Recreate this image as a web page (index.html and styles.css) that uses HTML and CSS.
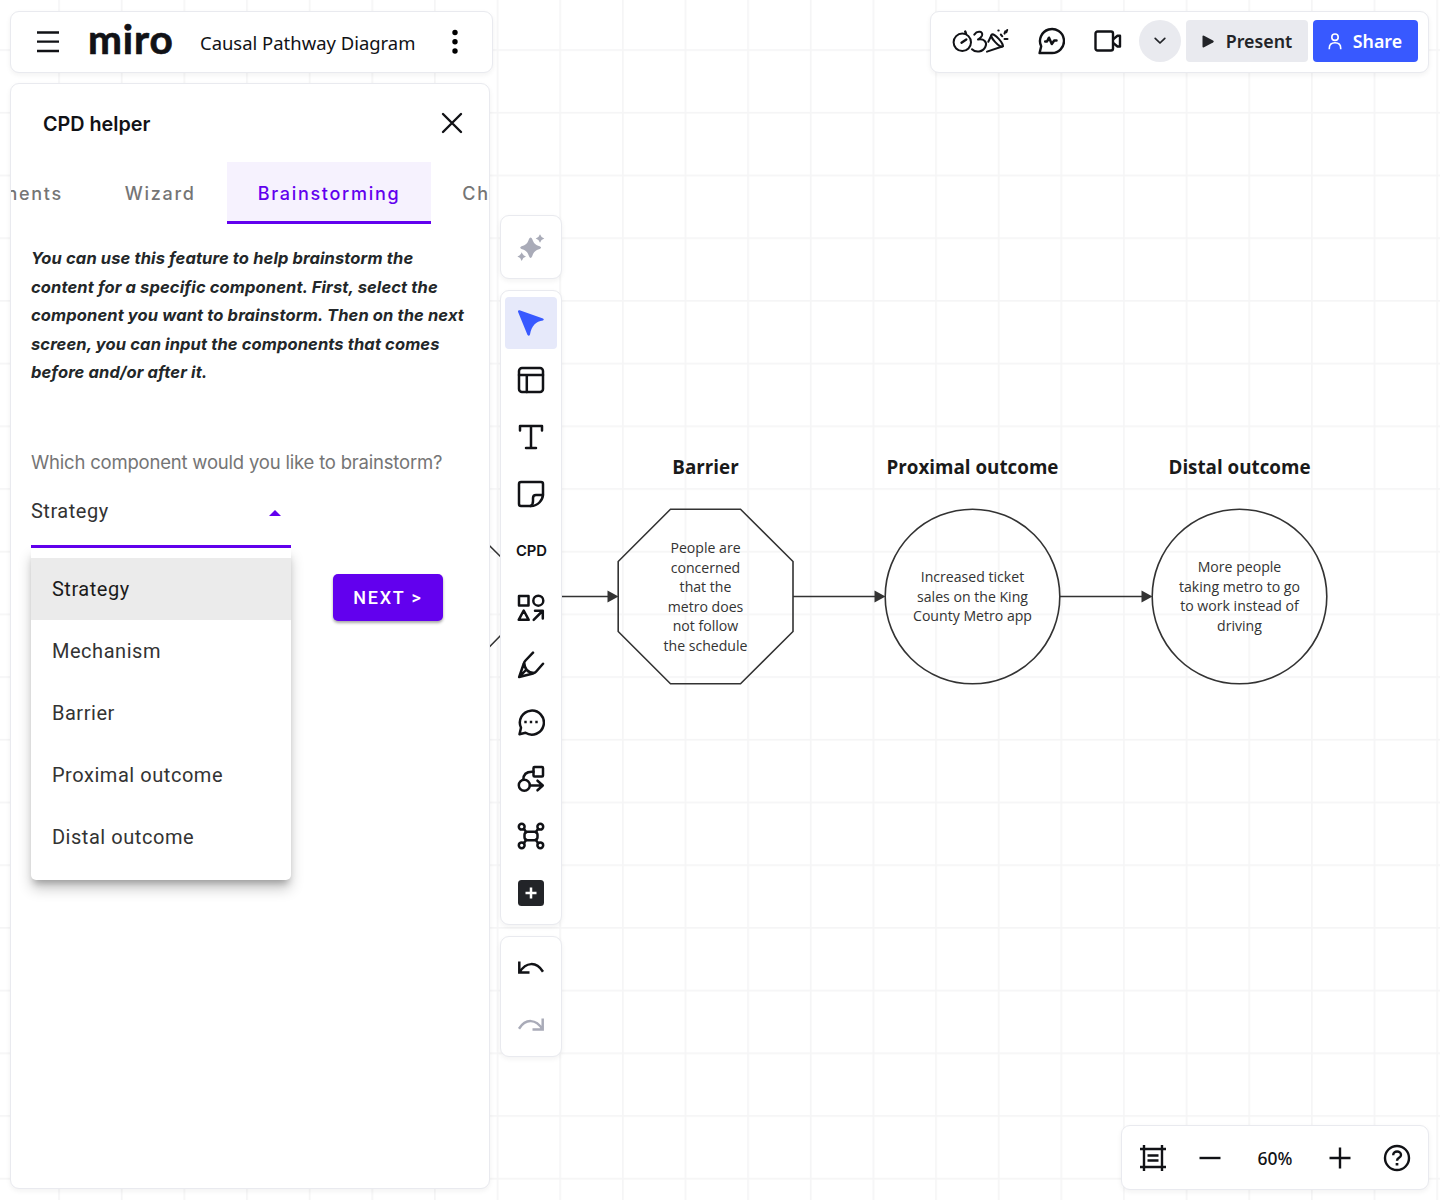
FILE: index.html
```html
<!DOCTYPE html>
<html lang="en">
<head>
<meta charset="utf-8">
<title>Causal Pathway Diagram</title>
<link rel="stylesheet" href="styles.css">
</head>
<body>
<div class="board">
  <svg class="canvas" width="1440" height="1200" viewBox="0 0 1440 1200">
    <defs>
      <pattern id="cols" x="58.2" y="0" width="62.64" height="1200" patternUnits="userSpaceOnUse"><rect width="1.7" height="1200" fill="#f5f5f6"/></pattern>
      <pattern id="rows" x="0" y="49.2" width="1440" height="62.7" patternUnits="userSpaceOnUse"><rect width="1440" height="1.7" fill="#f5f5f6"/></pattern>
    </defs>
    <rect width="1440" height="1200" fill="url(#cols)"/>
    <rect width="1440" height="1200" fill="url(#rows)"/>
    <g fill="none" stroke="#333" stroke-width="1.6">
      <path d="M440 509.500 H453 L505 561 V631 L453 684"/>
      <path d="M505 596.500H610M793 596.500H877M1060 596.500H1144"/>
      <path d="M670.500 509.300H740.500L793 561.500V631.500L740.500 683.800H670.500L618.200 631.500V561.500Z"/>
      <circle cx="972.500" cy="596.500" r="87.300"/>
      <circle cx="1239.500" cy="596.500" r="87.300"/>
    </g>
    <path fill="#333" d="M607.500 590.500L618.500 596.500L607.500 602.500ZM874.500 590.500L885.500 596.500L874.500 602.500ZM1141.500 590.500L1152.500 596.500L1141.500 602.500Z"/>
  </svg>
  <div class="node barrier"><h3>Barrier</h3><p>People are<br>concerned<br>that the<br>metro does<br>not follow<br>the schedule</p></div>
  <div class="node proximal"><h3>Proximal outcome</h3><p>Increased ticket<br>sales on the King<br>County Metro app</p></div>
  <div class="node distal"><h3>Distal outcome</h3><p>More people<br>taking metro to go<br>to work instead of<br>driving</p></div>

  <div class="chrome">
    <header class="topbar">
      <div class="card title-card">
        <svg class="burger" width="24" height="24" viewBox="0 0 24 24"><path d="M1 2.500H23M1 11.700H23M1 21H23"/></svg>
        <span class="logo">miro</span>
        <span class="board-name">Causal Pathway Diagram</span>
        <svg class="dots" width="8" height="26" viewBox="0 0 8 26"><circle cx="4" cy="3.500" r="2.700"/><circle cx="4" cy="12.700" r="2.700"/><circle cx="4" cy="22" r="2.700"/></svg>
      </div>
      <div class="card actions">
        <svg class="line facil" width="58" height="30" viewBox="951 26 58 30">
          <circle cx="962.300" cy="42.300" r="8.700"/><path d="M961.500 42.700L966.300 39.500M965.200 31.500L966 33.600" stroke-width="2.400"/>
          <path d="M974.300 34.600C977.500 30 983.500 31.500 982 35.600C981 38 978.500 39 978 39.500C984 38.500 987.500 42 985.500 46.500C983 52.500 975.500 52.800 972 49.200"/>
          <path d="M987 51.600L1003 46.300M988.300 41.800L991.300 35.500"/>
          <ellipse cx="997" cy="40.500" rx="8" ry="2.400" transform="rotate(47 997 40.500)"/>
          <path d="M998.300 30.500H998.700M1000.800 34.500L1002.300 36.300M1004.500 33.600L1005.300 31.300L1006.300 32.300L1007.200 30M1004.500 39H1007.500"/>
        </svg>
        <svg class="line" width="28" height="28" viewBox="0 0 28 28"><path d="M4.200 19.300L2.600 26H14.200A12 12 0 1 0 4.200 19.300Z"/><path d="M8.200 14.500H10L12 10.700L14.800 17L17.200 13.500H19.500" stroke-width="2.500"/></svg>
        <svg class="line" width="28" height="28" viewBox="0 0 28 28"><rect x="1.500" y="4.500" width="17.500" height="19" rx="2"/><path d="M19.500 12L23.500 8.800H26V19.500H23.500L19.500 16.300"/></svg>
        <span class="round"><svg width="12" height="8" viewBox="0 0 12 8"><path d="M1.200 1.300L6 6L10.800 1.300"/></svg></span>
        <span class="btn present"><svg width="12" height="13" viewBox="0 0 12 13"><path d="M.5 1.500Q.5 0 2 .7L11 5.500Q12.500 6.500 11 7.500L2 12.300Q.5 13 .5 11.500Z"/></svg><span>Present</span></span>
        <span class="btn share"><svg width="14" height="17" viewBox="0 0 14 17"><circle cx="7" cy="4.200" r="3.200"/><path d="M1.300 16.300V15.200C1.300 12 3.500 9.800 7 9.800S12.700 12 12.700 15.200V16.300"/></svg><span>Share</span></span>
      </div>
    </header>

    <div class="workspace">
      <aside class="card panel">
        <div class="panel-head">
          <h2>CPD helper</h2>
          <svg class="close" width="22" height="22" viewBox="0 0 22 22"><path d="M2 2L20 20M20 2L2 20"/></svg>
        </div>
        <nav class="tabs">
          <span class="tab first">Components</span>
          <span class="tab">Wizard</span>
          <span class="tab active">Brainstorming</span>
          <span class="tab">Ch</span>
        </nav>
        <p class="intro">You can use this feature to help brainstorm the<br>content for a specific component. First, select the<br>component you want to brainstorm. Then on the next<br>screen, you can input the components that comes<br>before and/or after it.</p>
        <p class="question">Which component would you like to brainstorm?</p>
        <div class="form">
          <div class="select">
            <div class="select-box"><span>Strategy</span><svg width="12" height="6" viewBox="0 0 12 6"><path d="M0 6L6 0L12 6Z"/></svg></div>
            <ul class="menu">
              <li class="selected">Strategy</li>
              <li>Mechanism</li>
              <li>Barrier</li>
              <li>Proximal outcome</li>
              <li>Distal outcome</li>
            </ul>
          </div>
          <span class="next">NEXT &gt;</span>
        </div>
      </aside>

      <div class="rail">
        <div class="card ai">
          <svg width="28" height="28" viewBox="0 0 28 28"><path d="M13.600 3.500Q14.700 3.500 15.200 5C16.800 9.500 18.300 11 22.700 12.300Q25.500 13.600 22.700 14.900C18.300 16.200 16.800 17.800 15.200 22.300Q13.600 25.500 12 22.300C10.500 17.800 9 16.200 4.500 14.900Q1.900 13.600 4.500 12.300C9 11 10.500 9.500 12 5Q12.600 3.500 13.600 3.500ZM23 .2Q24 3.500 27.300 4.500Q24 5.500 23 8.800Q22 5.500 18.700 4.500Q22 3.500 23 .2ZM4.700 18.300Q5.700 21.600 9 22.600Q5.700 23.600 4.700 27Q3.700 23.600 .4 22.600Q3.700 21.600 4.700 18.300Z"/></svg>
        </div>
        <div class="card tools">
          <span class="tool on"><svg width="28" height="28" viewBox="0 0 28 28"><path d="M1 2.800Q.6 .8 2.600 1.200L26 9.600Q27.800 10.700 26 11.600C19 12.200 14.500 17 13 25.500Q12 28 10.400 25.800Z"/></svg></span>
          <span class="tool"><svg width="28" height="28" viewBox="0 0 28 28"><rect x="2" y="2" width="24" height="24" rx="3"/><path d="M2 9H26M9.800 9V26"/></svg></span>
          <span class="tool"><svg width="28" height="28" viewBox="0 0 28 28"><path d="M3 7.500V3H25V7.500M14 3V25M9 25H19"/></svg></span>
          <span class="tool"><svg width="28" height="28" viewBox="0 0 28 28"><path d="M4 2H24Q26 2 26 4V14C26 20 21 26 14 26H4Q2 26 2 24V4Q2 2 4 2Z"/><path d="M26 15H19Q16 15 16 18V21Q16 25 13.500 26"/></svg></span>
          <span class="tool"><b>CPD</b></span>
          <span class="tool"><svg width="28" height="28" viewBox="0 0 28 28"><rect x="2" y="2" width="9.500" height="9.500"/><circle cx="21.300" cy="6.700" r="5"/><path d="M6.700 16.500L11.700 25.800H1.700ZM16.700 25.800L25.500 17M18 16.700H25.800V24.500"/></svg></span>
          <span class="tool"><svg width="28" height="28" viewBox="0 0 28 28"><path d="M16 1.700L8.500 9.500Q7.200 11 6.800 12.500L2.200 26L16 22.500Q18 22 19 20.800L26 12.700M7.200 11.500C7.500 18 11 21.800 17 22M2.500 25.700L8.500 19.500"/></svg></span>
          <span class="tool"><svg width="28" height="28" viewBox="0 0 28 28"><path d="M4 19.700L2.500 26.200L8.500 24.800A12 12 0 1 0 4 19.700Z"/><path d="M7.300 14H9.700M12.800 14H15.200M18.300 14H20.700" stroke-width="2.500" stroke-linecap="butt"/></svg></span>
          <span class="tool"><svg width="28" height="28" viewBox="0 0 28 28"><circle cx="7.300" cy="20.300" r="5.500"/><rect x="16.500" y="2" width="9.500" height="9.500" rx="1"/><path d="M16.500 6.700H15C9.500 6.700 6.300 9.500 6.300 14.800M13 20.500H25.500M20.500 15.700L25.800 20.500L20.500 25.300"/></svg></span>
          <span class="tool"><svg width="28" height="28" viewBox="0 0 28 28"><circle cx="4.700" cy="4.700" r="2.900"/><circle cx="23.300" cy="4.700" r="2.900"/><circle cx="4.700" cy="23.300" r="2.900"/><circle cx="23.300" cy="23.300" r="2.900"/><rect x="7.500" y="9.800" width="13" height="8.400" rx="3"/><path d="M7 7L9.300 10.300M21 7L18.700 10.300M7 21L9.300 17.700M21 21L18.700 17.700"/></svg></span>
          <span class="tool plus"><svg width="28" height="28" viewBox="0 0 28 28"><rect x="1" y="1" width="26" height="26" rx="3.500"/><path d="M14 8.500V19.500M8.500 14H19.500"/></svg></span>
        </div>
        <div class="card history">
          <span class="tool"><svg width="28" height="28" viewBox="0 0 28 28"><path d="M2.300 7.500V18.500H12.500M2.500 18.300C9 8 19 7 26 17.700"/></svg></span>
          <span class="tool off"><svg width="28" height="28" viewBox="0 0 28 28"><path d="M25.700 7.500V18.500H15.500M25.500 18.300C19 8 9 7 2 17.700"/></svg></span>
        </div>
      </div>
    </div>
  </div>

  <div class="card zoombar">
    <svg class="line" width="28" height="28" viewBox="0 0 28 28"><path d="M5 1V27M23 1V27M1 5H27M1 23H27M8.500 11.500H19.500M8.500 16.500H19.500" stroke-linecap="butt"/></svg>
    <svg class="line minus" width="22" height="22" viewBox="0 0 22 22"><path d="M.5 11H21.500" stroke-linecap="butt"/></svg>
    <span class="pct">60%</span>
    <svg class="line" width="22" height="22" viewBox="0 0 22 22"><path d="M.5 11H21.500M11 .5V21.500" stroke-linecap="butt"/></svg>
    <svg class="line help" width="28" height="28" viewBox="0 0 28 28"><circle cx="14" cy="14" r="12"/><path d="M10.200 11.200C10.200 6.200 18 6.500 18 11C18 14 14 13.700 14 16.700" stroke-linecap="butt"/><path d="M14 19V21.500" stroke-width="2.700" stroke-linecap="butt"/></svg>
  </div>
</div>
</body>
</html>
```
FILE: styles.css
```css
* { box-sizing: border-box; }
body { margin: 0; color: #111216; font-family: "Noto Sans", sans-serif; }
h2, h3, p, ul { margin: 0; padding: 0; }
svg { display: block; flex: none; }

.board { position: relative; width: 1440px; height: 1200px; overflow: hidden; background: #fff; }
.canvas { position: absolute; inset: 0; }

.node { position: absolute; top: 454px; width: 200px; height: 230px; text-align: center; }
.node h3 { font: 700 18.8px/26px "Open Sans", sans-serif; color: #1a1a1a; }
.node p { margin-top: 29px; font: 400 14.1px/19.6px "Open Sans", sans-serif; color: #333; }
.barrier { left: 605.5px; }
.barrier p { padding-top: 29px; }
.proximal { left: 872.5px; }
.proximal p { padding-top: 58px; }
.distal { left: 1139.5px; }
.distal p { padding-top: 48px; }

.card { background: #fff; border: 1.5px solid #e9eaef; border-radius: 9px; box-shadow: 0 2px 5px rgba(34, 36, 40, .06); }
.line { fill: none; stroke: #111216; stroke-width: 2.4; stroke-linecap: round; stroke-linejoin: round; }

.chrome { position: relative; height: 1200px; padding: 11px 10.6px 10px 10.4px; display: flex; flex-direction: column; gap: 10px; }
.topbar { display: flex; justify-content: space-between; height: 62px; }
.title-card { width: 483px; display: flex; align-items: center; padding: 0 0 1px 24.6px; }
.burger { fill: none; stroke: #111216; stroke-width: 2.3; }
.logo { margin: -5px 0 0 28px; width: 87px; font: 700 40.5px/50px Lato, sans-serif; letter-spacing: .9px; -webkit-text-stroke: .7px #111216; }
.board-name { margin: 1px 0 0 25px; width: 217px; font-size: 18.45px; white-space: nowrap; }
.dots { margin-left: 34px; }
.actions { width: 499px; display: flex; align-items: center; padding: 0 0 2px 19.4px; }
.facil { stroke-width: 2; }
.facil + svg { margin-left: 28px; }
.facil + svg + svg { margin-left: 29px; }
.round { width: 42px; height: 42px; margin-left: 17px; border-radius: 50%; background: #e9eaef; display: flex; align-items: center; justify-content: center; }
.round svg { fill: none; stroke: #222428; stroke-width: 1.7; stroke-linecap: round; stroke-linejoin: round; }
.btn { height: 42px; border-radius: 4px; display: flex; align-items: center; font-weight: 600; font-size: 17.8px; line-height: 24px; }
.present { width: 122px; margin-left: 5px; padding-left: 16px; gap: 12px; background: #e9eaef; color: #222428; }
.present svg { fill: #222428; }
.share { width: 105px; margin-left: 5px; padding-left: 15px; gap: 11px; background: #3859ff; color: #fff; }
.share svg { fill: none; stroke: #fff; stroke-width: 1.6; }

.workspace { display: flex; gap: 10.6px; }
.panel { width: 479.5px; height: 1106px; }
.panel-head { display: flex; justify-content: space-between; align-items: center; height: 78px; padding: 0 26px 0 31.5px; }
.panel-head h2 { padding-top: 2px; font: 600 19.8px/26px Inter, sans-serif; }
.close { fill: none; stroke: #111216; stroke-width: 2.4; stroke-linecap: round; }
.tabs { display: flex; height: 62px; overflow: hidden; font: 500 18px/64px Inter, sans-serif; letter-spacing: 1.7px; color: #757575; }
.tab { flex: none; height: 62px; padding: 0 31px; }
.tab.first { margin-left: -106.5px; }
.active { background: #f6f2fe; color: #6200ee; border-bottom: 3px solid #6200ee; }
.intro { margin: 20px 0 0 19.6px; font: italic 700 16.5px/28.5px Inter, sans-serif; letter-spacing: .12px; color: #232729; white-space: nowrap; }
.question { margin: 61px 0 0 19.6px; font: 400 18.5px/28px Inter, sans-serif; letter-spacing: -.2px; color: #757575; white-space: nowrap; }
.form { display: flex; align-items: flex-start; padding-left: 19.5px; }
.select { width: 260px; }
.select-box { display: flex; justify-content: space-between; align-items: center; height: 72px; padding: 1px 10px 0 0; border-bottom: 3px solid #6200ee; font: 400 20px/24px Roboto, sans-serif; letter-spacing: .55px; color: #333; }
.select-box svg { margin-top: 4px; fill: #6200ee; }
.menu { list-style: none; height: 332px; padding-top: 10px; border-radius: 0 0 5px 5px; box-shadow: 0 6px 7px -3px rgba(0, 0, 0, .25), 0 9px 14px rgba(0, 0, 0, .2); }
.menu li { height: 62.2px; padding-left: 21px; font: 400 20px/62px Roboto, sans-serif; letter-spacing: .55px; color: #333; }
.menu .selected { background: #ebebeb; color: #1b1b1b; }
.next { width: 110px; height: 47px; margin: 98px 0 0 42px; border-radius: 5px; background: #6200ee; box-shadow: 0 2px 3px rgba(0, 0, 0, .35); color: #fff; text-align: center; font: 500 18px/47px Roboto, sans-serif; letter-spacing: 1.75px; }

.rail { width: 62px; padding-top: 132px; display: flex; flex-direction: column; gap: 11px; }
.ai { height: 64px; display: flex; align-items: center; justify-content: center; padding-top: 1px; }
.ai svg { fill: #a9abb8; }
.tools { height: 635px; padding-top: 6px; }
.tool { display: flex; align-items: center; justify-content: center; width: 52px; height: 52px; margin: 0 auto 5px; border-radius: 4px; }
.tool svg { fill: none; stroke: #111216; stroke-width: 2.5; stroke-linecap: round; stroke-linejoin: round; }
.tool b { font: 600 14.8px/20px Inter, sans-serif; }
.on { background: #e6e9fa; }
.tool.on svg { fill: #3859ff; stroke: none; }
.tool.plus rect { fill: #222428; stroke: none; }
.tool.plus path { stroke: #fff; stroke-linecap: butt; }
.history { height: 121px; padding-top: 5px; }
.tool.off svg { stroke: #a9abb8; }
.history .tool svg { stroke-linecap: butt; stroke-linejoin: miter; }

.zoombar { position: absolute; right: 10.6px; bottom: 10px; width: 308px; height: 65px; display: flex; align-items: center; padding: 0 0 0 16.5px; }
.minus { margin-left: 32px; }
.pct { margin: 1px 35px 0; width: 38px; text-align: center; font-size: 17.5px; font-weight: 500; }
.help { margin-left: 32px; }
```
